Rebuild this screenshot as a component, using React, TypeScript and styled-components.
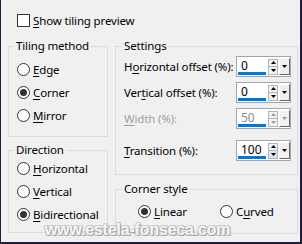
import React from 'react';
import styled, { createGlobalStyle } from 'styled-components';

const GlobalStyle = createGlobalStyle`
  html, body {
    margin: 0;
    padding: 0;
    background: #f0f0f0;
  }
`;

const Dialog = styled.div`
  position: relative;
  width: 302px;
  height: 244px;
  box-sizing: border-box;
  background: #f0f0f0;
  border-left: 1px solid #221b3c;
  border-right: 2px solid #221b3c;
  border-bottom: 2px solid #221b3c;
  padding: 14px 0 0 7px;
  font-family: "Noto Sans", "Open Sans", sans-serif;
  font-size: 11.5px;
  letter-spacing: -0.15px;
  color: #000;
  overflow: hidden;
`;

const CheckRow = styled.label`
  display: flex;
  align-items: center;
  gap: 3px;
  height: 13px;
  margin-left: 9px;
  line-height: 13px;
`;

const CheckBox = styled.span`
  width: 13px;
  height: 13px;
  box-sizing: border-box;
  border: 1px solid #333;
  background: #fff;
  flex: none;
`;

const Columns = styled.div`
  display: flex;
  gap: 7px;
  margin-top: 12px;
`;

const Column = styled.div<{ $width: number; $gap: number }>`
  display: flex;
  flex-direction: column;
  width: ${p => p.$width}px;
  gap: ${p => p.$gap}px;
`;

const Group = styled.fieldset<{ $height: number }>`
  margin: 0;
  padding: 0;
  min-width: 0;
  height: ${p => p.$height}px;
  box-sizing: border-box;
  border: 1px solid #dcdcdc;
`;

const Legend = styled.legend<{ $indent: number }>`
  margin-left: ${p => p.$indent}px;
  padding: 0 2px;
  line-height: 14px;
  font-size: 11.5px;
`;

const GroupBody = styled.div<{ $pad: string }>`
  padding: ${p => p.$pad};
`;

const OptionRow = styled.div<{ $width?: number }>`
  display: flex;
  align-items: center;
  gap: 3px;
  height: 23px;
  ${p => (p.$width ? `width: ${p.$width}px; flex: none;` : '')}
`;

const InlineOptions = styled.div`
  display: flex;
`;

const RadioCircle = styled.span<{ $checked?: boolean }>`
  width: 13px;
  height: 13px;
  box-sizing: border-box;
  border: 1px solid #333;
  border-radius: 50%;
  background: #fff;
  display: flex;
  align-items: center;
  justify-content: center;
  flex: none;

  &::after {
    content: '';
    display: ${p => (p.$checked ? 'block' : 'none')};
    width: 7px;
    height: 7px;
    border-radius: 50%;
    background: #333;
  }
`;

const Label = styled.span<{ $disabled?: boolean }>`
  white-space: nowrap;
  color: ${p => (p.$disabled ? '#a0a0a0' : '#000')};

  u {
    text-decoration: underline;
    text-underline-offset: 2px;
  }
`;

const SettingRow = styled.div<{ $top: number }>`
  display: flex;
  align-items: center;
  justify-content: space-between;
  height: 21px;
  margin-top: ${p => p.$top}px;
`;

const Spin = styled.div`
  display: flex;
  align-items: center;
  width: 55px;
  height: 21px;
  box-sizing: border-box;
  border: 1px solid #a6a6a6;
  background: #fff;
  flex: none;
`;

const Edit = styled.div<{ $disabled?: boolean }>`
  align-self: stretch;
  width: 28px;
  margin: 0 0 1px 1px;
  box-sizing: border-box;
  padding: 1px 0 0 3px;
  border-bottom: 3px solid #0078d7;
  display: flex;
  align-items: center;
  color: ${p => (p.$disabled ? '#8c8c8c' : '#000')};
  font-size: 12px;
  letter-spacing: 0;
`;

const UpDown = styled.div`
  display: flex;
  flex-direction: column;
  margin-left: 2px;
  width: 10px;
  height: 16px;
  box-sizing: border-box;
  border: 1px solid #b4b4b4;
`;

const Half = styled.div<{ $hot?: boolean }>`
  flex: 1;
  display: flex;
  align-items: center;
  justify-content: center;
  background: ${p => (p.$hot ? '#d8eaf9' : '#f4f4f4')};
  & + & {
    border-top: 1px solid #b4b4b4;
  }
`;

const Drop = styled.div`
  margin-left: 1px;
  width: 11px;
  height: 17px;
  box-sizing: border-box;
  background: #f0f0f0;
  border-top: 1px solid #fff;
  border-left: 1px solid #fff;
  border-right: 1px solid #6a6a6a;
  border-bottom: 1px solid #6a6a6a;
  display: flex;
  align-items: center;
  justify-content: center;
`;

const Watermark = styled.div`
  position: absolute;
  left: 44px;
  top: 221px;
  font-family: "Liberation Sans", Arial, sans-serif;
  font-weight: bold;
  font-size: 16px;
  letter-spacing: -0.2px;
  color: rgba(255, 255, 255, 0.88);
  text-shadow: 1px 1px 0 #a0a0a0, -1px -1px 0 #cfcfcf, 1px -1px 0 #c4c4c4, -1px 1px 0 #c4c4c4;
  white-space: nowrap;
  pointer-events: none;
`;

const Tri = ({ down, color = '#000' }: { down?: boolean; color?: string }) => (
  <svg width="5" height="3" viewBox="0 0 5 3">
    <path d={down ? 'M0 0H5L2.5 3Z' : 'M0 3H5L2.5 0Z'} fill={color} />
  </svg>
);

const Radio = ({ checked, children, width }: { checked?: boolean; children: React.ReactNode; width?: number }) => (
  <OptionRow $width={width}>
    <RadioCircle $checked={checked} />
    <Label>{children}</Label>
  </OptionRow>
);

const SpinField = ({ value, disabled, hot }: { value: string; disabled?: boolean; hot?: boolean }) => {
  const c = disabled ? '#9a9a9a' : '#000';
  return (
    <Spin>
      <Edit $disabled={disabled}>{value}</Edit>
      <UpDown>
        <Half><Tri color={c} /></Half>
        <Half $hot={hot}><Tri down color={c} /></Half>
      </UpDown>
      <Drop><Tri down color={c} /></Drop>
    </Spin>
  );
};

export default function App() {
  return (
    <>
      <GlobalStyle />
      <Dialog>
        <CheckRow>
          <CheckBox />
          <Label><u>S</u>how tiling preview</Label>
        </CheckRow>
        <Columns>
          <Column $width={100} $gap={6}>
            <Group $height={98}>
              <Legend $indent={5}>Tiling method</Legend>
              <GroupBody $pad="5px 0 0 8px">
                <Radio><u>E</u>dge</Radio>
                <Radio checked><u>C</u>orner</Radio>
                <Radio><u>M</u>irror</Radio>
              </GroupBody>
            </Group>
            <Group $height={90}>
              <Legend $indent={5}>Direction</Legend>
              <GroupBody $pad="0 0 0 8px">
                <Radio><u>H</u>orizontal</Radio>
                <Radio><u>V</u>ertical</Radio>
                <Radio checked><u>B</u>idirectional</Radio>
              </GroupBody>
            </Group>
          </Column>
          <Column $width={183} $gap={7}>
            <Group $height={136}>
              <Legend $indent={6}>Settings</Legend>
              <GroupBody $pad="0 6px 0 8px">
                <SettingRow $top={3}>
                  <Label>H<u>o</u>rizontal offset (%):</Label>
                  <SpinField value="0" />
                </SettingRow>
                <SettingRow $top={5}>
                  <Label>Ver<u>t</u>ical offset (%):</Label>
                  <SpinField value="0" />
                </SettingRow>
                <SettingRow $top={5}>
                  <Label $disabled><u>W</u>idth (%):</Label>
                  <SpinField value="50" disabled />
                </SettingRow>
                <SettingRow $top={11}>
                  <Label><u>T</u>ransition (%):</Label>
                  <SpinField value="100" hot />
                </SettingRow>
              </GroupBody>
            </Group>
            <Group $height={52}>
              <Legend $indent={6}>Corner style</Legend>
              <GroupBody $pad="4px 0 0 22px">
                <InlineOptions>
                  <Radio checked width={82}><u>L</u>inear</Radio>
                  <Radio>C<u>u</u>rved</Radio>
                </InlineOptions>
              </GroupBody>
            </Group>
          </Column>
        </Columns>
        <Watermark>www.estela-fonseca.com</Watermark>
      </Dialog>
    </>
  );
}
